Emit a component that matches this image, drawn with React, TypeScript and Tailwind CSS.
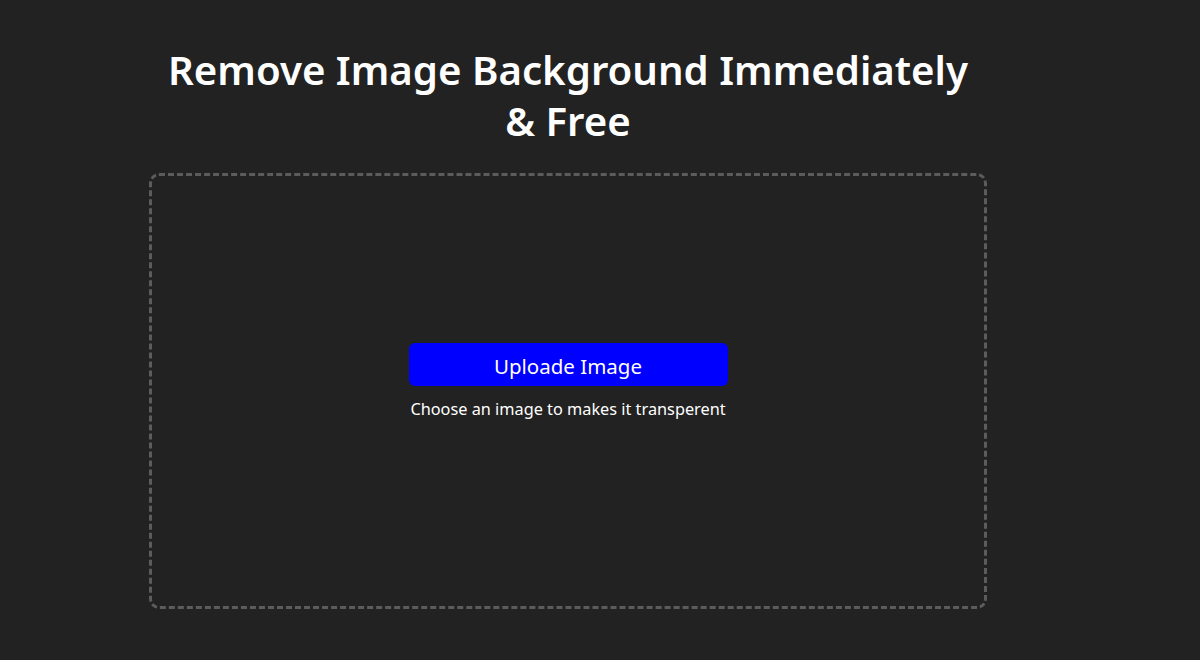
import React from "react";

export default function App() {
  return (
    <div
      className="w-[1200px] h-[660px] bg-[#222222] text-white overflow-hidden"
      style={{ fontFamily: '"Noto Sans", "Open Sans", sans-serif' }}
    >
      <div className="ml-[149px] w-[838px] flex flex-col items-center pt-[44px]">
        <h1 className="text-[40.2px] leading-[51px] font-semibold text-center whitespace-nowrap">
          Remove Image Background Immediately
          <br />
          &amp; Free
        </h1>
        <div className="mt-[27px] w-[838px] h-[436px] border-[3px] border-dashed border-[#5c5c5c] rounded-[10px] flex flex-col items-center pt-[167px]">
          <button className="w-[319px] h-[43px] bg-[#0000ff] rounded-md text-[20.5px] leading-[43px] text-white pt-[2px]">
            Uploade Image
          </button>
          <p className="mt-[12px] text-[16.3px] leading-[22px]">
            Choose an image to makes it transperent
          </p>
        </div>
      </div>
    </div>
  );
}
